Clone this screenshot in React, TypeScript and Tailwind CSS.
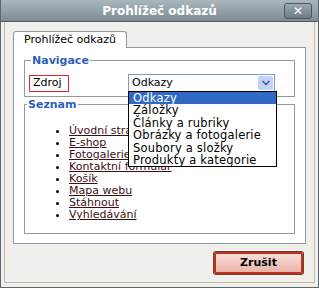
import { ChevronDown } from "lucide-react"

const links = [
  "Úvodní stránka",
  "E-shop",
  "Fotogalerie",
  "Kontaktní formulář",
  "Košík",
  "Mapa webu",
  "Stáhnout",
  "Vyhledávání",
]

const options = [
  "Odkazy",
  "Záložky",
  "Články a rubriky",
  "Obrázky a fotogalerie",
  "Soubory a složky",
  "Produkty a kategorie",
]

export default function App() {
  return (
    <div className="flex h-[288px] w-[319px] flex-col border border-t-0 border-[#5b666e] bg-[#f0efeb] font-['DejaVu_Sans',sans-serif] text-[11px] text-black">
      {/* Title bar */}
      <header className="relative flex h-[22px] shrink-0 items-center justify-center border-b border-[#4d5a63] bg-gradient-to-b from-[#aab6bd] to-[#7d8c96]">
        <span className="text-[12px] font-bold text-white">Prohlížeč odkazů</span>
        <button className="absolute right-[6px] top-[3px] flex h-[16px] w-[28px] items-center justify-center rounded-[3px] border border-[#4c565d] bg-gradient-to-b from-[#9aa7af] to-[#6f7d86] text-[12px] font-bold leading-none text-white">
          ✕
        </button>
      </header>

      <div className="mx-[3px] mb-[4px] flex flex-1 flex-col border border-t-0 border-[#c7b6a3] px-[8px] pt-[9px]">
        {/* Tab */}
        <div className="relative z-10 -mb-px flex">
          <div className="flex h-[17px] items-center rounded-t-[3px] border border-b-0 border-[#919b9c] bg-white px-[10px] text-[11px]">
            Prohlížeč odkazů
          </div>
        </div>

        {/* Panel */}
        <div className="relative flex h-[197px] flex-col gap-px border border-[#919b9c] bg-white px-[10px] pt-[6px]">
          <fieldset className="h-[43px] border border-[#919b9c] px-[4px] pt-[7px]">
            <legend className="ml-[2px] px-[1px] text-[11px] leading-[13px] font-bold text-[#2e5fb7]">Navigace</legend>
            <div className="flex items-center">
              <div className="flex h-[17px] w-[40px] items-center border border-[#e0272b] pl-[3px]">Zdroj</div>
              <div className="relative ml-[59px] flex h-[18px] w-[147px] items-center border border-[#7f9db9] bg-white pl-[3px]">
                <span>Odkazy</span>
                <span className="absolute right-[1px] top-[1px] flex h-[14px] w-[15px] items-center justify-center rounded-[2px] bg-[#c1d3fb] text-[#4d6185]">
                  <ChevronDown size={12} strokeWidth={3.5} />
                </span>
                {/* Open dropdown */}
                <ul className="absolute left-[-1px] top-[16px] z-20 w-[149px] border border-black bg-white text-[11.5px] leading-[12.4px] tracking-[0.2px]">
                  {options.map((o, i) => (
                    <li
                      key={o}
                      className={
                        i === 0
                          ? "h-[12.4px] bg-[#316ac5] pl-[4px] text-white"
                          : "h-[12.4px] pl-[4px] text-black"
                      }
                    >
                      {o}
                    </li>
                  ))}
                </ul>
              </div>
            </div>
          </fieldset>

          <fieldset className="h-[136px] border border-[#919b9c]">
            <legend className="ml-[2px] px-[1px] text-[11px] leading-[13px] font-bold text-[#2e5fb7]">Seznam</legend>
            <ul className="mt-[14px] list-disc pl-[44px] leading-[12px] marker:text-black">
              {links.map((l) => (
                <li key={l}>
                  <a href="#" className="text-[#3b0f12] underline">
                    {l}
                  </a>
                </li>
              ))}
            </ul>
          </fieldset>
        </div>

        {/* Footer */}
        <div className="flex flex-1 items-start justify-end pr-[3px] pt-[8px]">
          <button className="flex h-[22px] w-[89px] items-center justify-center rounded-[2px] border-2 border-[#c0311c] bg-gradient-to-b from-[#f8ddd7] to-[#e9b4aa] text-[11px] font-bold text-black shadow-[0_0_0_1px_#6b4038]">
            Zrušit
          </button>
        </div>
      </div>
    </div>
  )
}
